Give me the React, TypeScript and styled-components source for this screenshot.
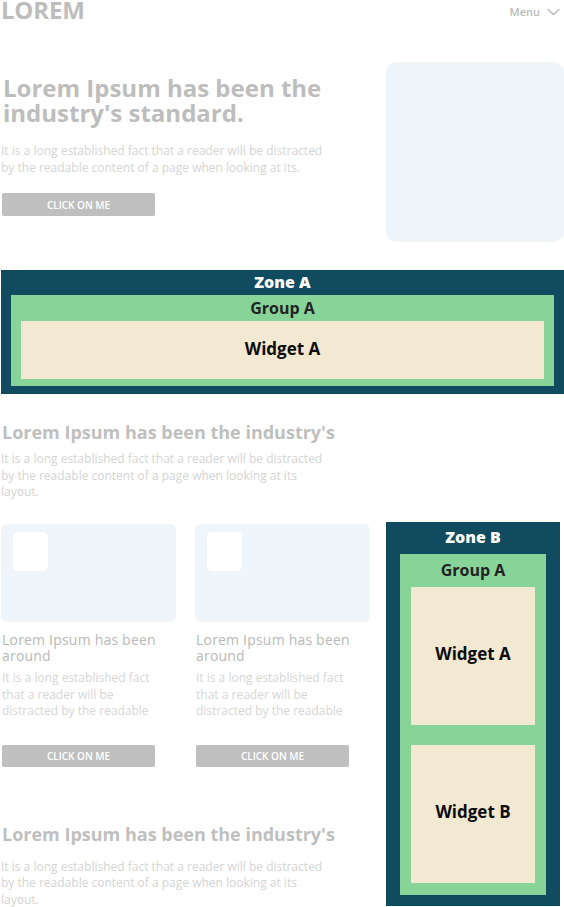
import React from "react";
import styled, { createGlobalStyle } from "styled-components";

const Global = createGlobalStyle`
  html, body { margin: 0; padding: 0; background: #ffffff; }
  body { font-family: "Open Sans", "Noto Sans", sans-serif; overflow: hidden; }
  * { box-sizing: border-box; }
`;

const Page = styled.div`
  width: 564px;
  padding-left: 1px;
  display: flex;
  flex-direction: column;
`;

const Header = styled.header`
  display: flex;
  justify-content: space-between;
  align-items: flex-start;
  height: 20px;
  padding-right: 4px;
`;

const Logo = styled.div`
  font-size: 24px;
  line-height: 20px;
  font-weight: 700;
  color: #bdbdbd;
  letter-spacing: -0.2px;
`;

const Menu = styled.div`
  display: flex;
  align-items: center;
  gap: 7px;
  padding-top: 4px;
  font-size: 11px;
  line-height: 15px;
  font-weight: 600;
  color: #bbbbbb;
`;

const Hero = styled.section`
  display: flex;
  justify-content: space-between;
  margin-top: 42px;
`;

const HeroText = styled.div`
  display: flex;
  flex-direction: column;
  align-items: flex-start;
  padding-top: 13px;
  width: 340px;
`;

const HeroTitle = styled.h1`
  margin: 0 0 0 2px;
  font-size: 24px;
  line-height: 25px;
  font-weight: 700;
  color: #bdbdbd;
`;

const Paragraph = styled.p<{ $mt: number }>`
  margin: ${(p) => p.$mt}px 0 0 0;
  width: 326px;
  font-size: 12px;
  line-height: 16.5px;
  font-weight: 400;
  color: #d4d4d4;
`;

const Button = styled.button<{ $mt: number; $h: number }>`
  margin: ${(p) => p.$mt}px 0 0 1px;
  width: 153px;
  height: ${(p) => p.$h}px;
  border: none;
  border-radius: 2px;
  background: #bfbfbf;
  color: #ffffff;
  font-family: "Open Sans", "Noto Sans", sans-serif;
  font-size: 10px;
  font-weight: 600;
  padding: 0;
  display: flex;
  align-items: center;
  justify-content: center;
`;

const HeroImage = styled.div`
  width: 178px;
  height: 180px;
  border-radius: 10px;
  background: #f0f5f9;
`;

const Zone = styled.div<{ $label: number; $pad: number; $bottom: number; $mt: number }>`
  margin-top: ${(p) => p.$mt}px;
  background: #114b5f;
  padding: 0 ${(p) => p.$pad}px ${(p) => p.$bottom}px;
  display: flex;
  flex-direction: column;
  & > span {
    height: ${(p) => p.$label}px;
  }
`;

const ZoneLabel = styled.span`
  display: flex;
  align-items: center;
  justify-content: center;
  padding-bottom: 1px;
  color: #ffffff;
  font-size: 16px;
  font-weight: 800;
`;

const Group = styled.div<{ $label: number; $pad: number; $bottom: number; $gap: number }>`
  background: #88d498;
  padding: 0 ${(p) => p.$pad}px ${(p) => p.$bottom}px;
  display: flex;
  flex-direction: column;
  gap: ${(p) => p.$gap}px;
  & > span {
    height: ${(p) => p.$label}px;
    margin-bottom: -${(p) => p.$gap}px;
  }
`;

const GroupLabel = styled.span`
  display: flex;
  align-items: center;
  justify-content: center;
  padding-bottom: 1px;
  color: #222222;
  font-size: 16px;
  font-weight: 700;
`;

const Widget = styled.div<{ $h: number }>`
  height: ${(p) => p.$h}px;
  background: #f3e9d2;
  display: flex;
  align-items: center;
  justify-content: center;
  padding-bottom: 4px;
  color: #0d0d0d;
  font-size: 17px;
  font-weight: 700;
`;

const Section = styled.section<{ $mt: number }>`
  margin-top: ${(p) => p.$mt}px;
  display: flex;
  flex-direction: column;
`;

const SectionTitle = styled.h2`
  margin: 0 0 0 1px;
  font-size: 18px;
  line-height: 24px;
  font-weight: 700;
  color: #bfbfbf;
`;

const Bottom = styled.div`
  margin-top: 21px;
  display: grid;
  grid-template-columns: 369px 174px;
  column-gap: 16px;
  align-items: start;
`;

const LeftCol = styled.div`
  display: flex;
  flex-direction: column;
`;

const Cards = styled.div`
  margin-top: 2px;
  display: grid;
  grid-template-columns: 175px 175px;
  column-gap: 19px;
`;

const Card = styled.div`
  display: flex;
  flex-direction: column;
  align-items: flex-start;
`;

const CardImage = styled.div`
  width: 175px;
  height: 98px;
  border-radius: 6px;
  background: #f0f5f9;
  padding: 8px 0 0 12px;
`;

const Thumb = styled.div`
  width: 35px;
  height: 39px;
  border-radius: 5px;
  background: #ffffff;
`;

const CardTitle = styled.h3`
  margin: 10.5px 0 0 0;
  padding-left: 1px;
  font-size: 14px;
  line-height: 16px;
  font-weight: 400;
  letter-spacing: 0.2px;
  color: #b9b9b9;
  width: 170px;
`;

const CardText = styled.p`
  margin: 6px 0 0 0;
  padding-left: 1px;
  width: 162px;
  font-size: 12px;
  line-height: 16.5px;
  color: #d6d6d6;
`;

const Chevron = () => (
  <svg width="13" height="8" viewBox="0 0 13 8" fill="none">
    <polyline points="1,1.5 6.5,6.5 12,1.5" stroke="#bbbbbb" strokeWidth="1.5" strokeLinecap="round" strokeLinejoin="round" />
  </svg>
);

const cards = [0, 1];

export default function App() {
  return (
    <>
      <Global />
      <Page>
        <Header>
          <Logo>LOREM</Logo>
          <Menu>
            Menu
            <Chevron />
          </Menu>
        </Header>

        <Hero>
          <HeroText>
            <HeroTitle>Lorem Ipsum has been the industry's standard.</HeroTitle>
            <Paragraph $mt={18}>
              It is a long established fact that a reader will be distracted by the readable content of a page when looking at its.
            </Paragraph>
            <Button $mt={17} $h={23}>CLICK ON ME</Button>
          </HeroText>
          <HeroImage />
        </Hero>

        <Zone $mt={28} $label={25} $pad={10} $bottom={8}>
          <ZoneLabel>Zone A</ZoneLabel>
          <Group $label={26} $pad={10} $bottom={7} $gap={0}>
            <GroupLabel>Group A</GroupLabel>
            <Widget $h={58}>Widget A</Widget>
          </Group>
        </Zone>

        <Section $mt={26}>
          <SectionTitle>Lorem Ipsum has been the industry's</SectionTitle>
          <Paragraph $mt={7}>
            It is a long established fact that a reader will be distracted by the readable content of a page when looking at its layout.
          </Paragraph>
        </Section>

        <Bottom>
          <LeftCol>
            <Cards>
              {cards.map((i) => (
                <Card key={i}>
                  <CardImage>
                    <Thumb />
                  </CardImage>
                  <CardTitle>Lorem Ipsum has been around</CardTitle>
                  <CardText>
                    It is a long established fact that a reader will be distracted by the readable
                  </CardText>
                  <Button $mt={25} $h={22}>CLICK ON ME</Button>
                </Card>
              ))}
            </Cards>
            <Section $mt={55}>
              <SectionTitle>Lorem Ipsum has been the industry's</SectionTitle>
              <Paragraph $mt={13}>
                It is a long established fact that a reader will be distracted by the readable content of a page when looking at its layout.
              </Paragraph>
            </Section>
          </LeftCol>

          <Zone $mt={0} $label={32} $pad={14} $bottom={11}>
            <ZoneLabel>Zone B</ZoneLabel>
            <Group $label={33} $pad={11} $bottom={12} $gap={20}>
              <GroupLabel>Group A</GroupLabel>
              <Widget $h={138}>Widget A</Widget>
              <Widget $h={138}>Widget B</Widget>
            </Group>
          </Zone>
        </Bottom>
      </Page>
    </>
  );
}
